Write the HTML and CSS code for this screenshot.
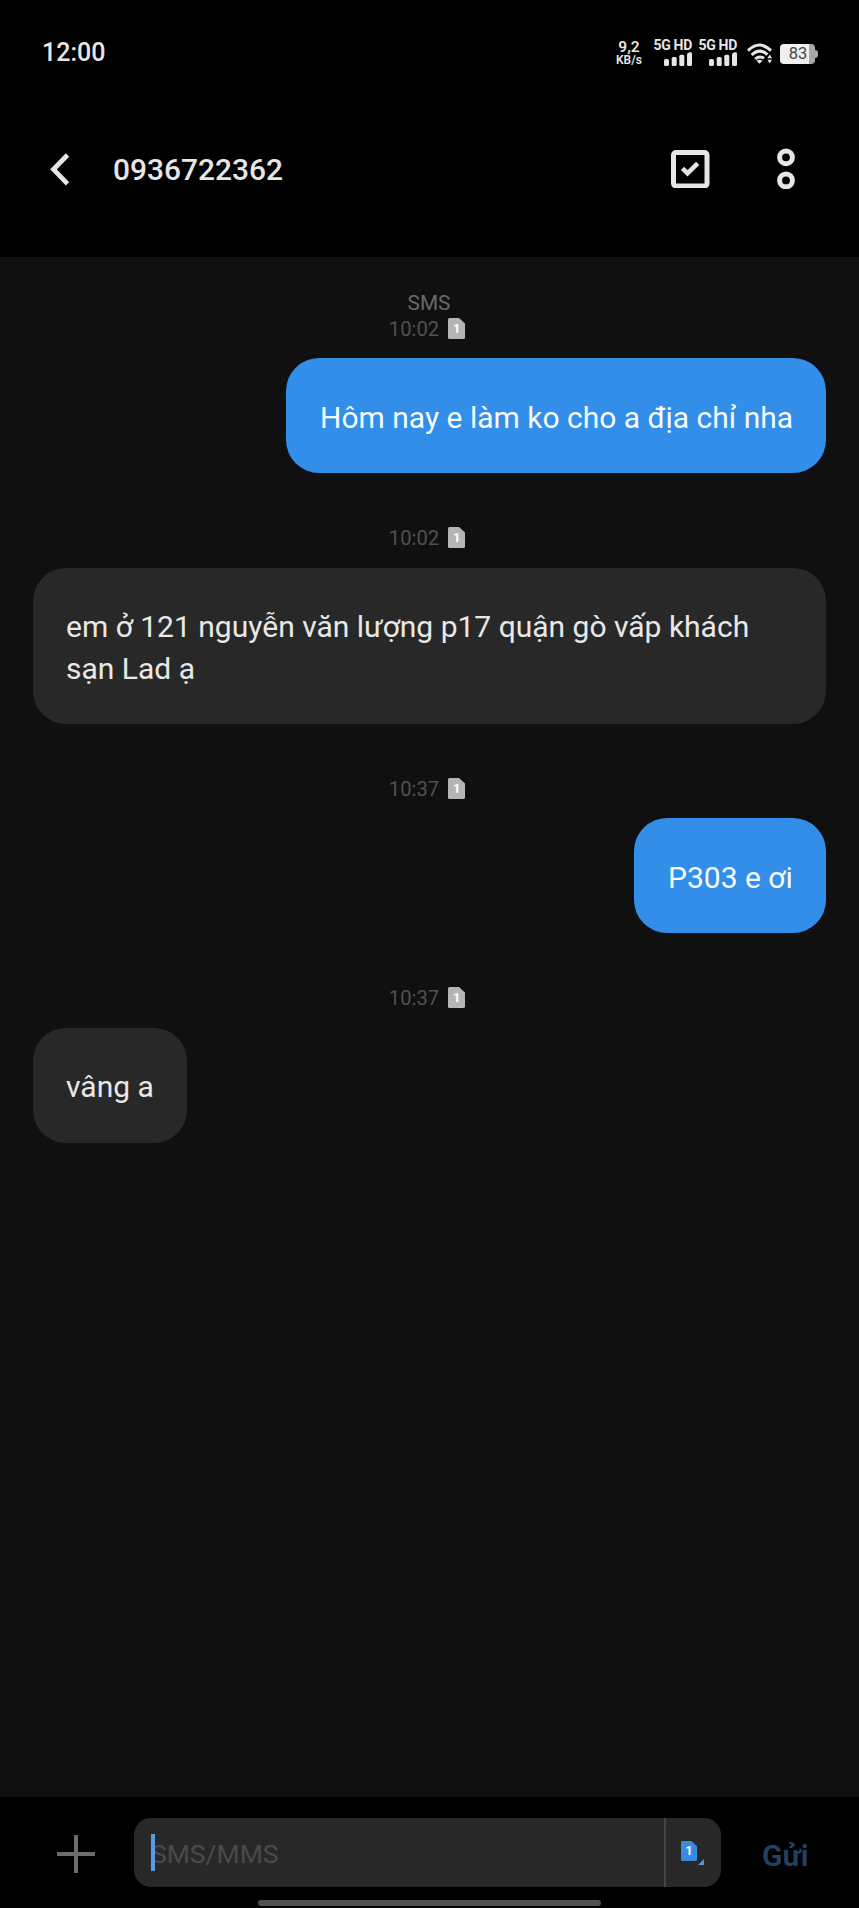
FILE: index.html
```html
<!DOCTYPE html>
<html lang="vi">
<head>
<meta charset="utf-8">
<title>0936722362</title>
<link rel="stylesheet" href="styles.css">
</head>
<body>
<svg width="0" height="0" class="defs">
  <symbol id="sim" viewBox="0 0 17 21"><path fill="currentColor" d="M1.6 0H11L17 5.5V19.4Q17 21 15.4 21H1.6Q0 21 0 19.4V1.6Q0 0 1.6 0Z"/></symbol>
  <symbol id="bars" viewBox="0 0 28 14"><g fill="#e6e6e6"><rect x="0" y="7" width="5" height="7" rx="1.6"/><rect x="7.7" y="5" width="5" height="9" rx="1.6"/><rect x="15.3" y="2.7" width="5" height="11.3" rx="1.6"/><path d="M23 2.5Q23 1 25.5.3Q28 0 28 1.5V12.4Q28 14 26.4 14H24.6Q23 14 23 12.4Z"/></g></symbol>
</svg>
<div class="phone">
  <div class="status">
    <div class="clock">12:00</div>
    <div class="speed"><span class="rate">9,2</span><span class="unit">KB/s</span></div>
    <div class="signal"><span>5G HD</span><svg width="28" height="14"><use href="#bars"/></svg></div>
    <div class="signal"><span>5G HD</span><svg width="28" height="14"><use href="#bars"/></svg></div>
    <svg class="wifi" width="26" height="22" viewBox="0 0 26 22"><g fill="none" stroke="#e6e6e6" stroke-width="3"><path d="M1 7.6Q12.5-3.6 24 7.6"/><path d="M4.6 12Q12.5 4.4 20.4 11.6"/><path d="M8.2 16Q12.5 12.2 17 15.4"/></g><path fill="#e6e6e6" d="M9.6 17.8Q12.5 15.6 15.4 17.8L12.5 20.8ZM20.4 15.2L22.7 11.6L25 15.2ZM20.4 16.8L22.7 20.4L25 16.8Z"/></svg>
    <div class="battery"><div class="cell">83</div><div class="cap"></div></div>
  </div>

  <header class="header">
    <svg class="back" width="20" height="33" viewBox="0 0 20 33"><path d="M17.5 2L3.5 16.3L17.5 30.8" fill="none" stroke="#e6e6e6" stroke-width="4.8"/></svg>
    <h1 class="title">0936722362</h1>
    <svg class="check" width="39" height="39" viewBox="0 0 39 39"><rect x="2.5" y="3.5" width="33.5" height="33.5" rx="2.5" fill="none" stroke="#e6e6e6" stroke-width="5"/><path d="M11.5 19.3L16.5 24.3L26.7 14.3" fill="none" stroke="#e6e6e6" stroke-width="4.6"/></svg>
    <svg class="more" width="18" height="41" viewBox="0 0 18 41"><g fill="none" stroke="#e6e6e6" stroke-width="5"><circle cx="9" cy="9.3" r="6.4"/><circle cx="9" cy="32.4" r="6.4"/></g></svg>
  </header>

  <main class="thread">
    <div class="kind">SMS</div>
    <div class="stamp"><span>10:02</span><span class="sim"><svg width="17" height="21"><use href="#sim"/></svg><b>1</b></span></div>
    <div class="bubble sent first">Hôm nay e làm ko cho a địa chỉ nha</div>
    <div class="stamp"><span>10:02</span><span class="sim"><svg width="17" height="21"><use href="#sim"/></svg><b>1</b></span></div>
    <div class="bubble got wide">em ở 121 nguyễn văn lượng p17 quận gò vấp khách sạn Lad ạ</div>
    <div class="stamp"><span>10:37</span><span class="sim"><svg width="17" height="21"><use href="#sim"/></svg><b>1</b></span></div>
    <div class="bubble sent second">P303 e ơi</div>
    <div class="stamp"><span>10:37</span><span class="sim"><svg width="17" height="21"><use href="#sim"/></svg><b>1</b></span></div>
    <div class="bubble got short">vâng a</div>
  </main>

  <footer class="composer">
    <div class="entry">
      <svg class="plus" width="38" height="38" viewBox="0 0 38 38"><path d="M0 19H38M19 0V38" stroke="#6c6c6c" stroke-width="4"/></svg>
      <div class="field">
        <div class="input"><span class="hint">SMS/MMS</span><span class="caret"></span></div>
        <div class="picker"><span class="sim blue"><svg width="16" height="20" viewBox="0 0 17 21"><use href="#sim"/></svg><b>1</b></span><svg class="corner" width="6" height="6" viewBox="0 0 6 6"><path d="M6 0V6H0Z" fill="#5b93cf"/></svg></div>
      </div>
      <div class="send">Gửi</div>
    </div>
    <div class="home"></div>
  </footer>
</div>
</body>
</html>
```
FILE: styles.css
```css
* { box-sizing: border-box; }
body { margin: 0; background: #000; font-family: Roboto, "Noto Sans", sans-serif; }
svg { display: block; flex: none; }
.defs { position: absolute; }
.phone { width: 859px; height: 1908px; display: flex; flex-direction: column; overflow: hidden; color: #e6e6e6; }

.status { height: 105px; padding: 34px 41px 0 42px; display: flex; align-items: flex-start; flex: none; }
.clock { font-size: 25px; line-height: 36px; font-weight: 500; margin: 1px auto 0 0; }
.speed { display: flex; flex-direction: column; align-items: center; width: 28px; margin: 6px 10px 0 0; font-weight: 600; }
.rate { font-size: 15.5px; line-height: 14px; }
.unit { font-size: 12px; line-height: 13px; white-space: nowrap; }
.signal { width: 39px; margin: 4px 6px 0 0; display: flex; flex-direction: column; align-items: flex-end; font-size: 14px; line-height: 14px; letter-spacing: -0.3px; font-weight: 700; white-space: nowrap; }
.signal + .wifi { margin: 9px 7px 0 4px; }
.battery { display: flex; align-items: center; margin-top: 10px; }
.cell { width: 35px; height: 20px; padding-left: 1px; border-radius: 4px; background: linear-gradient(90deg, #f0f0f0 84%, #a8a8a8 84%); color: #444; font-size: 16.5px; line-height: 20px; text-align: center; }
.cap { width: 3px; height: 8px; background: #a8a8a8; border-radius: 0 3px 3px 0; }

.header { height: 152px; padding: 44px 64px 0 50px; display: flex; align-items: flex-start; flex: none; }
.back { margin-top: 4px; }
.title { margin: 2px auto 0 43px; font-size: 29.9px; line-height: 38px; font-weight: 500; }
.check { margin: 0 67px 0 0; }
.more { margin-top: -1px; }

.thread { flex: 1; background: #101010; padding: 33px 33px 0; display: flex; flex-direction: column; align-items: flex-start; }
.kind { align-self: center; height: 27px; line-height: 26px; font-size: 20.8px; color: #696969; padding-right: 1px; }
.stamp { align-self: center; display: flex; align-items: center; gap: 9px; height: 22px; font-size: 20.2px; line-height: 24px; color: #505050; padding-right: 5px; }
.stamp > span:first-child { padding-top: 1px; }
.sim { display: grid; color: #b5b5b5; }
.sim svg, .sim b { grid-area: 1 / 1; }
.sim b { color: #fff; font-size: 13px; line-height: 21px; text-align: center; }
.bubble { margin: 19px 0 53.5px; padding: 39px 33px 34px; border-radius: 33px; font-size: 30px; line-height: 42px; white-space: nowrap; }
.sent { align-self: flex-end; background: #328ee8; color: #f6fbff; padding-left: 34px; }
.got { background: #282828; color: #e8e8e8; }
.first { width: 540px; }
.second { width: 192px; }
.wide { width: 793px; padding-top: 38.5px; padding-bottom: 33.5px; white-space: normal; }
.short { width: 154px; padding-top: 38.5px; padding-bottom: 34.5px; }

.composer { height: 111px; padding-top: 21px; background: #000; flex: none; }
.entry { display: flex; align-items: center; height: 69px; padding-left: 57px; }
.plus { margin-top: 3px; }
.field { margin-left: 39px; width: 587px; height: 69px; display: flex; border-radius: 17px; background: #282828; }
.input { width: 532px; padding-left: 17px; display: grid; align-items: center; border-right: 2px solid #454545; }
.input > * { grid-area: 1 / 1; }
.hint { font-size: 26.5px; line-height: 34px; color: #4a4a4a; padding-top: 3px; }
.caret { width: 4px; height: 37px; background: #5b9ce3; }
.picker { flex: 1; display: flex; align-items: flex-start; padding: 23px 0 0 15px; }
.blue { color: #378ce0; }
.blue b { font-size: 13px; line-height: 20px; }
.corner { margin: 18px 0 0 1px; }
.send { margin-left: 41px; padding-top: 6px; font-size: 30px; font-weight: 600; color: #234263; }
.home { width: 343px; height: 6px; margin: 13px auto 0; border-radius: 3px; background: #505050; }
```
